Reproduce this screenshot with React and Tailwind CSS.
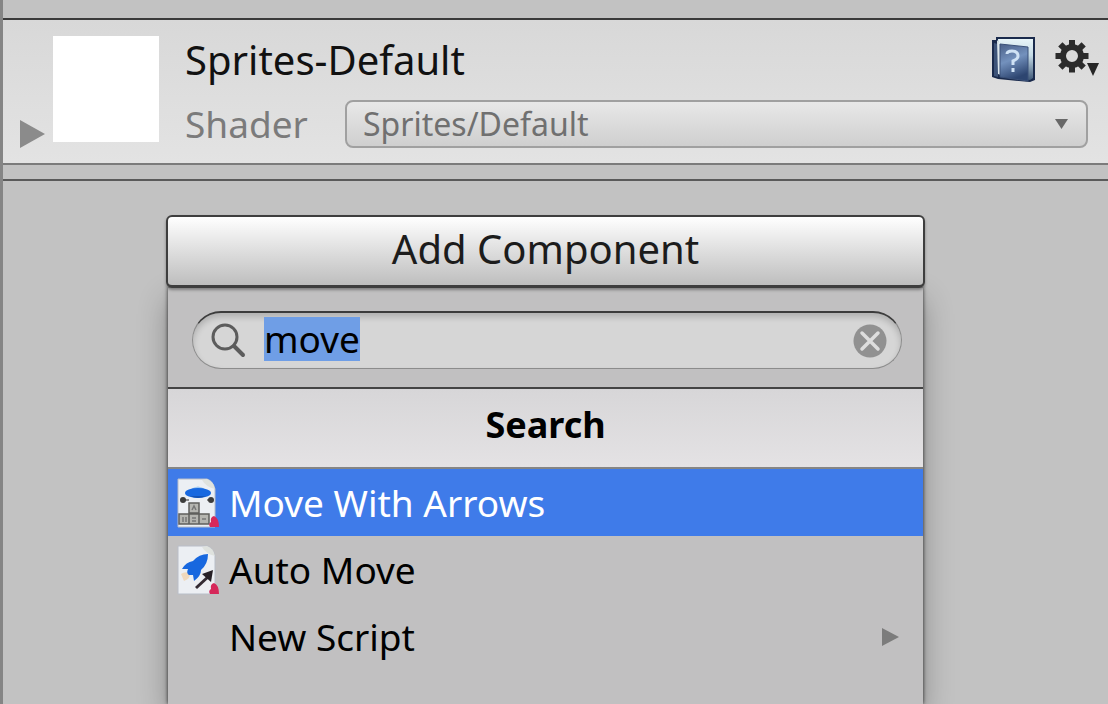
import { useEffect, useRef, useState } from 'react';

// Blue reference book with a question mark on the cover
const HelpBookIcon = () => (
  <svg className="h-12 w-11" viewBox="0 0 44 48" aria-hidden="true">
    <defs>
      <linearGradient id="cover" x1="0" y1="0" x2="0.3" y2="1">
        <stop offset="0" stopColor="#4a6088" />
        <stop offset="0.5" stopColor="#7391bd" />
        <stop offset="1" stopColor="#2d4570" />
      </linearGradient>
      <linearGradient id="pages" x1="0" y1="0" x2="0" y2="1">
        <stop offset="0" stopColor="#e8f5f8" />
        <stop offset="0.4" stopColor="#c5dbe6" />
        <stop offset="1" stopColor="#3f5878" />
      </linearGradient>
    </defs>
    <path d="M0 4 L4 4 V1 H43 V44 L38 46 L6 43 L0 41 Z" fill="#1a2a4c" />
    <path d="M2 7 V40 L6 41 V8 Z" fill="#3d5379" />
    <path d="M6 3 H41 V42 L38 44 L8 40 Z" fill="url(#pages)" />
    <path d="M5 4 L9 9 V39 L6 38 Z" fill="#dbe6ec" />
    <path d="M8 8 L36 11 V45 L8 41 Z" fill="url(#cover)" stroke="#3b5178" strokeWidth="1" />
    <path d="M15 18 Q15 15 20 15 Q26 15 26 20 Q26 23 21 25 V29 M21 32 V36" fill="none" stroke="#cfe2f5" strokeWidth="3" />
  </svg>
);

const GearIcon = () => (
  <svg className="h-10 w-12" viewBox="0 0 48 40" aria-hidden="true">
    <g transform="translate(20 16)" fill="#2b2b2b">
      {[0, 45, 90, 135, 180, 225, 270, 315].map((angle) => (
        <rect key={angle} x="-3" y="-16.5" width="6" height="8" transform={`rotate(${angle})`} />
      ))}
      <circle r="9" fill="none" stroke="#2b2b2b" strokeWidth="6" />
    </g>
    <path d="M35 23 H47 L41 36 Z" fill="#262626" />
  </svg>
);

const SearchIcon = () => (
  <svg className="h-9 w-9 shrink-0" viewBox="0 0 36 36" fill="none" stroke="#5c5c5c" aria-hidden="true">
    <circle cx="15" cy="14" r="12" strokeWidth="3" />
    <path d="M24 23 L33 32" strokeWidth="4" strokeLinecap="round" />
  </svg>
);

const ClearIcon = () => (
  <svg className="h-[34px] w-[34px]" viewBox="0 0 34 34" aria-hidden="true">
    <circle cx="17" cy="17" r="16.5" fill="#919191" />
    <path d="M9 9 L25 25 M25 9 L9 25" stroke="#dedede" strokeWidth="3.5" strokeLinecap="round" />
  </svg>
);

// White script page with a folded corner, shared by both script icons
const ScriptPage = ({ children }) => (
  <svg className="h-[50px] w-11 shrink-0" viewBox="0 0 44 50" aria-hidden="true">
    <path d="M2 1 H31 Q37 3 39 11 V49 H2 Z" fill="#eceff3" stroke="#b9bec8" strokeWidth="1" />
    <path d="M26 2 Q30 9 39 11 Q37 3 31 1 Z" fill="#dfe2de" />
    {children}
    <path d="M35 44 Q34 39 38 38 Q43 40 43 49 H34 Q32 46 35 44 Z" fill="#d6285a" />
  </svg>
);

const SaucerIcon = () => (
  <ScriptPage>
    <path d="M14 12 Q22 5 30 12 Z" fill="#9fc8f2" />
    <ellipse cx="22" cy="15" rx="13" ry="5" fill="#1768e0" />
    <path d="M14 18 Q22 22 30 18 Z" fill="#1453b5" />
    <path d="M8 22 H13 M31 22 H36" stroke="#6c6c6c" strokeWidth="1.5" />
    <circle cx="7" cy="22" r="3" fill="#3c3c3c" />
    <circle cx="35" cy="22" r="3" fill="#3c3c3c" />
    <path d="M13 25 H23 V35 H13 Z M3 36 H13 V46 H3 Z M13 36 H23 V46 H13 Z M23 36 H33 V46 H23 Z" fill="#b5b5b0" stroke="#5f5f5c" strokeWidth="1.5" />
    <path d="M16 32 L18 28 L20 32 M7 39 V44 M10 39 V44 M16 40 H20 M16 43 H20 M26 41 H30" fill="none" stroke="#777" strokeWidth="1.5" />
  </ScriptPage>
);

const RocketIcon = () => (
  <ScriptPage>
    <path d="M5 29 Q9 26 14 28 Q15 33 8 36 Z" fill="#f0d9bd" />
    <path d="M32 9 Q23 9 17 16 Q10 17 6 24 L12 24 Q10 28 13 30 L17 30 L18 36 Q25 31 25 25 Q32 19 32 9 Z" fill="#1767df" />
    <path d="M20 43 L33 31" stroke="#332b33" strokeWidth="3" />
    <path d="M26 29 L37 25 L35 37 Z" fill="#262026" />
  </ScriptPage>
);

const results = [
  { name: 'Move With Arrows', icon: <SaucerIcon /> },
  { name: 'Auto Move', icon: <RocketIcon /> },
  { name: 'New Script', submenu: true },
];

// Material header: preview swatch, name and shader selector
const MaterialHeader = () => (
  <header className="flex h-[145px] border-b-2 border-[#7b7b7b] bg-linear-to-b from-[#d8d8d8] to-[#e3e3e3] pt-4 pr-5 pl-4">
    <button type="button" aria-label="Expand material" className="mt-[84px] h-7 w-[26px] shrink-0">
      <svg className="h-7 w-[26px]" viewBox="0 0 26 28" aria-hidden="true">
        <path d="M1 0 L26 14 L1 28 Z" fill="#8b8b8b" />
      </svg>
    </button>
    <div className="ml-2 h-[106px] w-[106px] shrink-0 bg-white" />
    <div className="ml-[26px] min-w-0 flex-1">
      <div className="flex h-12 items-center justify-between">
        <h1 className="text-[40px] leading-[48px] text-[#111]">Sprites-Default</h1>
        <div className="-mr-3 flex items-start gap-4">
          <button type="button" aria-label="Open reference">
            <HelpBookIcon />
          </button>
          <button type="button" aria-label="Material settings" className="mt-1">
            <GearIcon />
          </button>
        </div>
      </div>
      <div className="mt-4 flex h-12 items-center">
        <label htmlFor="shader" className="w-[160px] shrink-0 text-[37px] leading-[48px] text-[#7b7b7b]">
          Shader
        </label>
        <div className="relative flex-1">
          <select
            id="shader"
            className="block h-12 w-full appearance-none rounded-lg border-2 border-[#a0a0a0] bg-linear-to-b from-[#e8e8e8] to-[#cfcfcf] px-4 text-[32px] leading-[44px] text-[#707070]"
          >
            <option>Sprites/Default</option>
          </select>
          <svg className="pointer-events-none absolute top-[19px] right-5 h-[10px] w-[13px]" viewBox="0 0 13 10" aria-hidden="true">
            <path d="M0 0 H13 L6.5 10 Z" fill="#686868" />
          </svg>
        </div>
      </div>
    </div>
  </header>
);

const ComponentPopup = () => {
  const [query, setQuery] = useState('move');
  const inputRef = useRef(null);

  useEffect(() => {
    inputRef.current.focus();
    inputRef.current.select();
  }, []);

  return (
    <div className="mx-[2px] flex-1 bg-[#c1c0c1] shadow-[0_12px_28px_rgba(0,0,0,0.3),0_0_4px_rgba(0,0,0,0.8)]">
      <div className="h-[101px] border-b-2 border-[#444] pt-[23px] pr-[21px] pl-6">
        <div className="flex h-[58px] items-center rounded-full border border-t-2 border-[#8c8c8c] border-t-[#3c3c3c] bg-[#d6d6d6] pr-[14px] pl-[17px] shadow-[inset_0_4px_6px_rgba(0,0,0,0.18)]">
          <SearchIcon />
          <input
            ref={inputRef}
            type="text"
            aria-label="Search components"
            value={query}
            onChange={(e) => setQuery(e.target.value)}
            className="mb-1 ml-[18px] h-11 min-w-0 flex-1 bg-transparent text-[37px] leading-[44px] text-black outline-none selection:bg-[#6f9ee6] selection:text-black"
          />
          <button type="button" aria-label="Clear search" onClick={() => setQuery('')}>
            <ClearIcon />
          </button>
        </div>
      </div>
      <h2 className="h-20 border-b-2 border-[#858585] bg-linear-to-b from-[#d7d6d8] to-[#e4e2e4] text-center text-[36px] leading-[72px] font-bold text-black">
        Search
      </h2>
      <ul>
        {results.map((item, index) => (
          <li key={item.name}>
            <button
              type="button"
              className={`flex h-[67px] w-full items-center pr-6 pl-2 text-left text-[37px] leading-[67px] ${
                index === 0 ? 'bg-[#3f7be9] text-white' : 'text-black'
              }`}
            >
              <span className="w-[53px] shrink-0">{item.icon}</span>
              <span className="flex-1">{item.name}</span>
              {item.submenu && (
                <svg className="h-[18px] w-[17px]" viewBox="0 0 17 18" aria-hidden="true">
                  <path d="M0 0 L17 9 L0 18 Z" fill="#7c7c7c" />
                </svg>
              )}
            </button>
          </li>
        ))}
      </ul>
    </div>
  );
};

export default function App() {
  return (
    <div className="flex h-screen flex-col overflow-hidden border-l-[3px] border-[#858585] bg-[#c2c2c2] font-['Noto_Sans',sans-serif]">
      <div className="h-5 shrink-0 border-b-2 border-[#3a3a3a]" />
      <MaterialHeader />
      <div className="h-4 shrink-0 border-b-2 border-[#5a5a5a]" />
      <main className="flex flex-1 flex-col pt-[34px] pr-[183px] pl-[163px]">
        <button
          type="button"
          className="relative h-[73px] shrink-0 rounded-md border-2 border-b-3 border-[#3e3e3e] bg-linear-to-b from-white to-[#bebebe] pb-1 text-[40px] leading-[60px] text-[#1c1c1c] shadow-[0_2px_3px_rgba(0,0,0,0.35)]"
        >
          Add Component
        </button>
        <ComponentPopup />
      </main>
    </div>
  );
}
